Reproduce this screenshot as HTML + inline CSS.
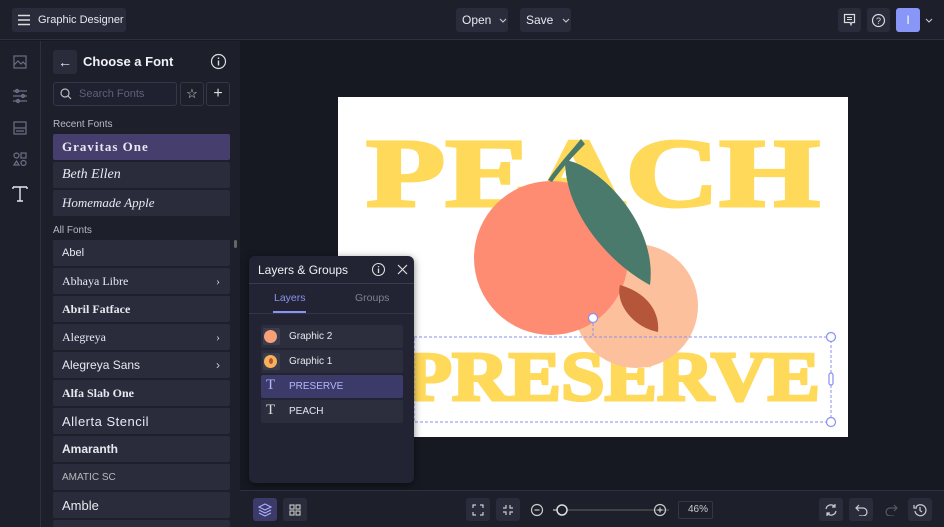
<!DOCTYPE html>
<html><head><meta charset="utf-8"><style>
*{box-sizing:border-box;margin:0;padding:0}
html,body{width:944px;height:527px;overflow:hidden}
body{background:#171922;font-family:"Liberation Sans",sans-serif;color:#e6e7ee;position:relative}
.abs{position:absolute}
.top{left:0;top:0;width:944px;height:40px;background:#1d1f2b;border-bottom:1px solid #2e3040}
.btn{position:absolute;background:#2a2c3b;border-radius:3px;font-size:12px;color:#e8e9f0;display:flex;align-items:center}
.rail{left:0;top:41px;width:41px;height:486px;background:#1d1f2b;border-right:1px solid #2e3040}
.fp{left:41px;top:41px;width:199px;height:486px;background:#1d1f2b;overflow:hidden}
.item{position:absolute;left:53px;width:177px;height:26px;background:#2a2c3c;border-radius:2px;font-size:12px;padding-left:9px;display:flex;align-items:center;color:#e8e9f0}
.chev{position:absolute;right:10px;top:6px;font-size:12px;color:#ccc}
.lbl{position:absolute;left:53px;font-size:10px;color:#b8bac8}
.bot{left:240px;top:490px;width:704px;height:37px;background:#1d1f2b;border-top:1px solid #2e3040}
.ib{position:absolute;top:498px;width:24px;height:23px;background:#2a2c3b;border-radius:3px}
.lp{left:249px;top:256px;width:165px;height:227px;background:#222433;border-radius:6px;box-shadow:0 2px 8px rgba(0,0,0,.5)}
.row{position:absolute;left:261px;width:142px;height:23px;background:#2c2e3e;border-radius:2px;font-size:10px;display:flex;align-items:center;padding-left:28px;color:#e6e7ee}
</style></head><body>
<div class="abs top"></div>
<div class="btn" style="left:12px;top:8px;width:114px;height:24px;padding-left:26px;font-size:11px">Graphic Designer</div>
<svg class="abs" style="left:17px;top:14px" width="14" height="12"><path d="M1 1.5H13M1 6H13M1 10.5H13" stroke="#ddd" stroke-width="1.4"/></svg>
<div class="btn" style="left:456px;top:8px;width:52px;height:24px;padding-left:6px">Open <svg style="margin-left:8px" width="8" height="5"><path d="M1 1l3 3 3-3" fill="none" stroke="#ccc" stroke-width="1.1"/></svg></div>
<div class="btn" style="left:520px;top:8px;width:51px;height:24px;padding-left:6px">Save <svg style="margin-left:9px" width="8" height="5"><path d="M1 1l3 3 3-3" fill="none" stroke="#ccc" stroke-width="1.1"/></svg></div>
<div class="btn" style="left:838px;top:8px;width:23px;height:24px"></div>
<svg class="abs" style="left:843px;top:13px" width="13" height="13"><rect x="1.5" y="1.5" width="10" height="8" fill="none" stroke="#ddd" stroke-width="1.2"/><path d="M4 4.5h5M4 6.5h5M7 9.5l1 2.5 1-2.5" stroke="#ddd" stroke-width="1"/></svg>
<div class="btn" style="left:867px;top:8px;width:23px;height:24px"></div>
<svg class="abs" style="left:871px;top:13px" width="15" height="15"><circle cx="7.5" cy="7.5" r="6" fill="none" stroke="#ddd" stroke-width="1.2"/><text x="7.5" y="11" font-size="9" text-anchor="middle" fill="#ddd" font-family="Liberation Sans">?</text></svg>
<div class="btn" style="left:896px;top:8px;width:24px;height:24px;background:#8796f7;justify-content:center;font-size:12px;color:#fff">I</div>
<svg class="abs" style="left:925px;top:18px" width="8" height="5"><path d="M1 1l3 3 3-3" fill="none" stroke="#ccc" stroke-width="1.1"/></svg>

<div class="abs rail"></div>
<svg class="abs" style="left:0;top:41px" width="40" height="170" fill="none" stroke="#6c6f85" stroke-width="1.2">
<rect x="14" y="15" width="12" height="12"/><path d="M14 24l4-4 3 3 2-2 3 3"/>
<path d="M13 50h14M13 55h14M13 60h14"/><circle cx="17" cy="50" r="1.5"/><circle cx="23" cy="55" r="1.5"/><circle cx="18" cy="60" r="1.5"/>
<rect x="14" y="81" width="12" height="12"/><path d="M14 87h12M16 90h8"/>
<circle cx="16.5" cy="114.5" r="2.5"/><rect x="21" y="112" width="5" height="5"/><path d="M14 124l2.5-4 2.5 4z"/><circle cx="23.5" cy="122" r="2.5"/>
<path d="M13 146h14M20 146v14M17 160h6M13 146v2M27 146v2" stroke="#e6e7ee" stroke-width="1.4"/>
</svg>

<div class="abs fp"></div>
<div class="btn" style="left:53px;top:50px;width:24px;height:24px;justify-content:center;font-size:14px">&#8592;</div>
<div class="abs" style="left:83px;top:54px;font-size:13px;font-weight:bold;color:#f0f0f5">Choose a Font</div>
<svg class="abs" style="left:210px;top:53px" width="17" height="17"><circle cx="8.5" cy="8.5" r="7" fill="none" stroke="#ddd" stroke-width="1.2"/><path d="M8.5 7.5v5M8.5 4.5v1.5" stroke="#ddd" stroke-width="1.4"/></svg>
<div class="abs" style="left:53px;top:82px;width:124px;height:24px;border:1px solid #34364a;background:#1f2130;border-radius:3px"></div>
<svg class="abs" style="left:60px;top:88px" width="12" height="12"><circle cx="5" cy="5" r="4" fill="none" stroke="#bbb" stroke-width="1.2"/><path d="M8 8l3 3" stroke="#bbb" stroke-width="1.2"/></svg>
<div class="abs" style="left:79px;top:88px;font-size:11px;color:#5e6176">Search Fonts</div>
<div class="abs" style="left:180px;top:82px;width:24px;height:24px;border:1px solid #34364a;border-radius:3px;font-size:13px;text-align:center;line-height:22px;color:#ddd">&#9734;</div>
<div class="abs" style="left:206px;top:82px;width:24px;height:24px;border:1px solid #34364a;border-radius:3px;font-size:16px;text-align:center;line-height:21px;color:#ddd">+</div>
<div class="lbl" style="top:119px">Recent Fonts</div>
<div class="item" style="top:134px;background:#463f6e;font-family:'Liberation Serif',serif;font-weight:bold;font-size:13px;letter-spacing:1px">Gravitas One</div>
<div class="item" style="top:162px;font-family:'Liberation Serif',serif;font-style:italic;font-size:14px">Beth Ellen</div>
<div class="item" style="top:190px;font-family:'Liberation Serif',serif;font-style:italic;font-size:13px">Homemade Apple</div>
<div class="lbl" style="top:225px">All Fonts</div>
<div class="abs" style="left:234px;top:240px;width:3px;height:8px;background:#666;border-radius:2px"></div>
<div class="item" style="top:240px;font-size:11px">Abel</div>
<div class="item" style="top:268px;font-family:'Liberation Serif',serif">Abhaya Libre<span class="chev">&#8250;</span></div>
<div class="item" style="top:296px;font-family:'Liberation Serif',serif;font-weight:bold">Abril Fatface</div>
<div class="item" style="top:324px;font-family:'Liberation Serif',serif">Alegreya<span class="chev">&#8250;</span></div>
<div class="item" style="top:352px">Alegreya Sans<span class="chev">&#8250;</span></div>
<div class="item" style="top:380px;font-family:'Liberation Serif',serif;font-weight:bold">Alfa Slab One</div>
<div class="item" style="top:408px;font-size:13px;letter-spacing:.5px">Allerta Stencil</div>
<div class="item" style="top:436px;font-weight:bold">Amaranth</div>
<div class="item" style="top:464px;font-size:10px;color:#bbb">AMATIC SC</div>
<div class="item" style="top:492px;font-size:13px">Amble</div>
<div class="item" style="top:520px;height:7px"></div>

<svg class="abs" style="left:0;top:0" width="944" height="527">
<rect x="338" y="97" width="510" height="340" fill="#fff"/>
<defs><clipPath id="c"><rect x="338" y="97" width="510" height="340"/></clipPath></defs>
<g clip-path="url(#c)" font-family="Liberation Serif,serif" font-weight="bold" fill="#ffd95a" stroke="#ffd95a" stroke-width="3">
<text x="366" y="206" font-size="98" textLength="454" lengthAdjust="spacingAndGlyphs">PEACH</text>
<text x="404" y="400" font-size="70" textLength="416" lengthAdjust="spacingAndGlyphs">PRESERVE</text>
</g>
<circle cx="636" cy="306" r="62" fill="#fdc09d"/>
<circle cx="551" cy="258" r="77" fill="#fe8c73"/>
<path d="M581 139 C572 150 558 165 548 180 L552 182 C562 168 574 155 585 144Z" fill="#4a7a6b"/>
<path d="M565 160 C600 165 658 225 650 285 C612 265 565 215 565 160Z" fill="#4a7a6b"/>
<path d="M620 285 C645 292 660 310 658 332 C635 328 615 305 620 285Z" fill="#b5553a"/>
<g fill="none" stroke="#8a8ff0" stroke-width="1" stroke-dasharray="3,2">
<rect x="414" y="337" width="417" height="85"/><path d="M593 318v19"/></g>
<g fill="#fff" stroke="#8a8ff0" stroke-width="1.2">
<circle cx="593" cy="318" r="4.5"/><circle cx="831" cy="337" r="4.5"/><circle cx="831" cy="422" r="4.5"/><rect x="829" y="373" width="4" height="12" rx="2"/></g>
</svg>

<div class="abs lp"></div>
<div class="abs" style="left:258px;top:263px;font-size:12px;color:#f0f0f5">Layers &amp; Groups</div>
<svg class="abs" style="left:371px;top:262px" width="15" height="15"><circle cx="7.5" cy="7.5" r="6" fill="none" stroke="#ddd" stroke-width="1.1"/><path d="M7.5 6.5v4.5M7.5 4v1.3" stroke="#ddd" stroke-width="1.3"/></svg>
<svg class="abs" style="left:397px;top:264px" width="11" height="11"><path d="M1 1l9 9M10 1l-9 9" stroke="#ddd" stroke-width="1.2"/></svg>
<div class="abs" style="left:249px;top:283px;width:165px;height:1px;background:#3a3c52"></div>
<div class="abs" style="left:274px;top:292px;font-size:10.5px;color:#8a93f2">Layers</div>
<div class="abs" style="left:273px;top:311px;width:33px;height:2px;background:#8a93f2"></div>
<div class="abs" style="left:355px;top:292px;font-size:10.5px;color:#7e8196">Groups</div>
<div class="abs" style="left:249px;top:313px;width:165px;height:1px;background:#33354a"></div>
<div class="row" style="top:325px">Graphic 2</div>
<div class="row" style="top:350px">Graphic 1</div>
<div class="row" style="top:375px;background:#3c3a68;color:#b3b6ff">PRESERVE</div>
<div class="row" style="top:400px">PEACH</div>
<div class="abs" style="left:263px;top:328px;width:17px;height:17px;background:#3a3d4d;border-radius:2px"></div>
<div class="abs" style="left:264px;top:330px;width:13px;height:13px;background:#f8a078;border-radius:50%"></div>
<div class="abs" style="left:263px;top:353px;width:17px;height:17px;background:#3a3d4d;border-radius:2px"></div>
<div class="abs" style="left:264px;top:355px;width:13px;height:13px;background:#f9b15a;border-radius:50%"></div>
<div class="abs" style="left:269px;top:358px;width:4px;height:6px;background:#b5553a;border-radius:50%"></div>
<div class="abs" style="left:266px;top:377px;font-family:'Liberation Serif',serif;font-size:15px;color:#b3b6ff">T</div>
<div class="abs" style="left:266px;top:402px;font-family:'Liberation Serif',serif;font-size:15px;color:#ddd">T</div>

<div class="abs bot"></div>
<div class="ib" style="left:253px;background:#3c3a68"></div>
<svg class="abs" style="left:258px;top:503px" width="14" height="14" fill="none" stroke="#aab0ff" stroke-width="1.1"><path d="M7 1l6 3-6 3-6-3z"/><path d="M1 7l6 3 6-3M1 10l6 3 6-3"/></svg>
<div class="ib" style="left:283px"></div>
<svg class="abs" style="left:289px;top:504px" width="12" height="12" fill="none" stroke="#ccc" stroke-width="1.1"><rect x="1" y="1" width="4" height="4"/><rect x="7" y="1" width="4" height="4"/><rect x="1" y="7" width="4" height="4"/><rect x="7" y="7" width="4" height="4"/></svg>
<div class="ib" style="left:466px"></div>
<svg class="abs" style="left:472px;top:504px" width="12" height="12" fill="none" stroke="#ccc" stroke-width="1.2"><path d="M1 4V1h3M8 1h3v3M11 8v3H8M4 11H1V8"/></svg>
<div class="ib" style="left:496px"></div>
<svg class="abs" style="left:502px;top:504px" width="12" height="12" fill="none" stroke="#ccc" stroke-width="1.2"><path d="M1 4h3V1M8 1v3h3M11 8H8v3M4 11V8H1"/></svg>
<svg class="abs" style="left:529px;top:502px" width="140" height="16" fill="none" stroke="#ccc" stroke-width="1.2">
<circle cx="8" cy="8" r="5.5"/><path d="M5.5 8h5"/>
<path d="M38 8h108" stroke="#555"/><path d="M24 8h4"/><circle cx="33" cy="8" r="5" fill="#1d1f2b" stroke="#ddd" stroke-width="1.5"/>
<circle cx="131" cy="8" r="5.5"/><path d="M128.5 8h5M131 5.5v5"/></svg>
<div class="abs" style="left:678px;top:501px;width:35px;height:18px;border:1px solid #34364a;border-radius:2px;font-size:10px;color:#ccc;text-align:right;padding-right:4px;line-height:16px">46%</div>
<div class="ib" style="left:819px"></div>
<svg class="abs" style="left:824px;top:503px" width="14" height="14" fill="none" stroke="#ccc" stroke-width="1.2"><path d="M2 6a5 5 0 0 1 9-2M12 8a5 5 0 0 1-9 2M11 1v3H8M3 13v-3h3"/></svg>
<div class="ib" style="left:849px"></div>
<svg class="abs" style="left:855px;top:504px" width="13" height="12" fill="none" stroke="#ccc" stroke-width="1.2"><path d="M4 1L1 4l3 3M1 4h7a4 4 0 0 1 0 8H4"/></svg>
<svg class="abs" style="left:885px;top:504px" width="13" height="12" fill="none" stroke="#55586a" stroke-width="1.2"><path d="M9 1l3 3-3 3M12 4H5a4 4 0 0 0 0 8h4"/></svg>
<div class="ib" style="left:908px"></div>
<svg class="abs" style="left:913px;top:503px" width="14" height="14" fill="none" stroke="#ccc" stroke-width="1.2"><path d="M3 4a5.5 5.5 0 1 1-1 4M1 2v3h3M7 4v3.5l2 1.5"/></svg>
</body></html>
